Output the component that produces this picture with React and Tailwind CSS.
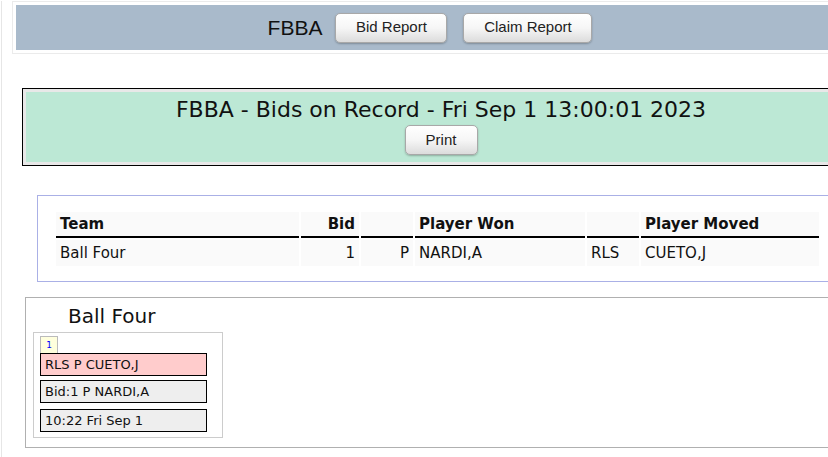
import React from "react";

const btn =
  "h-[30px] rounded-[5px] border border-[#a8a8a8] bg-gradient-to-b from-white via-[#f6f6f6] to-[#dcdcdc] shadow-[0_1px_2px_rgba(0,0,0,0.25)] text-[15px] text-[#222] font-['Liberation_Sans',Arial,sans-serif]";

function Header() {
  return (
    <div className="ml-[10px] mt-[1px] w-[840px] border border-[#ebebeb] p-[3px]">
      <div className="h-[45px] bg-[#a9bacb] flex items-center justify-center gap-4 pr-[4px]">
        <span className="text-[21px] text-[#111] font-['Liberation_Sans',Arial,sans-serif] mr-[-3px]">FBBA</span>
        <button className={btn + " w-[112px]"}>Bid Report</button>
        <button className={btn + " w-[129px]"}>Claim Report</button>
      </div>
    </div>
  );
}

function Banner() {
  return (
    <div className="ml-[20px] mt-[34px] w-[838px] border border-black bg-[#e8e8e8] p-[3px]">
      <div className="h-[70px] bg-[#bce8d5] flex flex-col items-center">
        <div className="mt-[3px] h-[30px] text-[22px] leading-[30px] text-[#111] font-['DejaVu_Sans',Verdana,sans-serif]">
          FBBA - Bids on Record - Fri Sep 1 13:00:01 2023
        </div>
        <button className={btn + " w-[73px]"}>Print</button>
      </div>
    </div>
  );
}

const rows = [{ team: "Ball Four", bid: "1", pos: "P", won: "NARDI,A", rls: "RLS", moved: "CUETO,J" }];

function BidTable() {
  const th = "bg-[#fafafa] border-b-2 border-black h-[26px] px-1 pt-[1px] font-bold text-left";
  const td = "bg-[#fafafa] h-[26px] px-1";
  return (
    <div className="ml-[35px] mt-[29px] w-[820px] border border-[#aab0e6] pl-[16px] pt-[14px] pb-[13px]">
      <table className="border-separate border-spacing-[2px] text-[15px] text-[#111] font-['DejaVu_Sans',Verdana,sans-serif]">
        <thead>
          <tr>
            <th className={th + " w-[243px]"}>Team</th>
            <th className={th + " w-[58px] !text-right"}>Bid</th>
            <th className={th + " w-[52px]"}></th>
            <th className={th + " w-[170px]"}>Player Won</th>
            <th className={th + " w-[52px]"}></th>
            <th className={th + " w-[178px]"}>Player Moved</th>
          </tr>
        </thead>
        <tbody>
          {rows.map((r) => (
            <tr key={r.team}>
              <td className={td}>{r.team}</td>
              <td className={td + " text-right"}>{r.bid}</td>
              <td className={td + " text-right"}>{r.pos}</td>
              <td className={td}>{r.won}</td>
              <td className={td}>{r.rls}</td>
              <td className={td}>{r.moved}</td>
            </tr>
          ))}
        </tbody>
      </table>
    </div>
  );
}

function TeamCard() {
  const line = "w-[167px] h-[23px] border border-black pl-[4px] text-[13px] leading-[21px] text-[#111]";
  return (
    <div className="ml-[23px] mt-[15px] w-[840px] h-[151px] border border-[#b0b0b0] pl-[7px] font-['DejaVu_Sans',Verdana,sans-serif]">
      <div className="pl-[35px] pt-[5px] h-[34px] text-[20px] leading-[26px] text-[#111]">Ball Four</div>
      <div className="w-[190px] h-[106px] border border-[#cccccc] pl-[6px] pt-[3px]">
        <div className="w-[18px] h-[17px] border border-b-0 border-[#bbbbbb] bg-[#ffffdd] text-[9px] leading-[16px] text-center text-[#0000ff]">
          1
        </div>
        <div className={line + " bg-[#ffcccc]"}>RLS P CUETO,J</div>
        <div className={line + " bg-[#eeeeee] mt-[4px]"}>Bid:1 P NARDI,A</div>
        <div className={line + " bg-[#eeeeee] mt-[6px]"}>10:22 Fri Sep 1</div>
      </div>
    </div>
  );
}

export default function App() {
  return (
    <div className="w-[828px] h-[457px] overflow-hidden bg-white">
      <div className="ml-[1px] w-[900px] min-h-[457px] border-l border-[#e6e6e6]">
        <Header />
        <Banner />
        <BidTable />
        <TeamCard />
      </div>
    </div>
  );
}
